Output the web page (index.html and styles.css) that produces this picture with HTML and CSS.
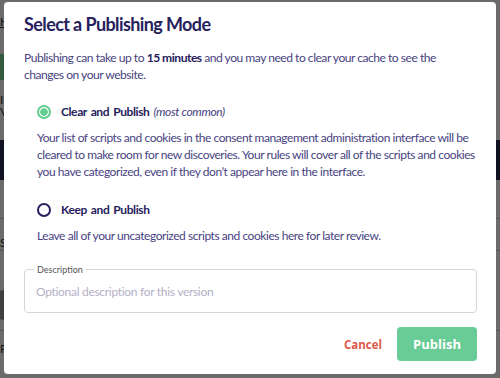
FILE: index.html
```html
<!DOCTYPE html>
<html lang="en">
<head>
    <meta charset="UTF-8">
    <meta name="viewport" content="width=device-width, initial-scale=1.0">
    <title>Select a Publishing Mode</title>
    <link rel="stylesheet" href="styles.css">
</head>
<body>
    <!-- Page behind the dialog -->
    <div class="page">
        <a class="page-link" href="#">Home</a>
        <div class="page-banner"></div>
        <p class="page-note">Info<br>View</p>
        <div class="page-band"></div>
        <div class="page-row page-row-first">Scripts</div>
        <div class="page-row page-row-tall"><span class="page-avatar"></span></div>
        <div class="page-row">Rules</div>
    </div>

    <!-- Dialog -->
    <div class="overlay">
        <div class="modal">
            <h1 class="modal-title">Select a Publishing Mode</h1>
            <p class="modal-intro">Publishing can take up to <strong>15 minutes</strong> and you may need to clear your cache to see the changes on your website.</p>

            <div class="option">
                <label class="option-label">
                    <span class="radio radio-checked"></span>
                    <span>Clear and Publish <em>(most common)</em></span>
                </label>
                <p class="option-text">Your list of scripts and cookies in the consent management administration interface will be cleared to make room for new discoveries. Your rules will cover all of the scripts and cookies you have categorized, even if they don’t appear here in the interface.</p>
            </div>

            <div class="option">
                <label class="option-label">
                    <span class="radio"></span>
                    <span>Keep and Publish</span>
                </label>
                <p class="option-text">Leave all of your uncategorized scripts and cookies here for later review.</p>
            </div>

            <fieldset class="field">
                <legend>Description</legend>
                <input type="text" placeholder="Optional description for this version">
            </fieldset>

            <div class="actions">
                <button class="btn-cancel">Cancel</button>
                <button class="btn-publish">Publish</button>
            </div>
        </div>
    </div>
</body>
</html>
```

FILE: styles.css
```css
* {
    margin: 0;
    padding: 0;
    box-sizing: border-box;
}

body {
    font-family: 'Lato', sans-serif;
    background-color: #fff;
    color: #333;
    width: 500px;
    height: 378px;
    overflow: hidden;
}

/* Background page */
.page {
    padding-top: 14px;
}

.page-link {
    display: block;
    font-size: 12px;
    color: #333;
    height: 28px;
}

.page-banner {
    height: 26px;
    width: 60px;
    background-color: #7bd99a;
    margin-top: 12px;
}

.page-note {
    font-size: 12px;
    line-height: 12px;
    padding-top: 14px;
    height: 60px;
}

.page-band {
    height: 40px;
    background-color: #262a55;
}

.page-row {
    border-top: 1px solid #ccc;
    padding-top: 10px;
    font-size: 12px;
    height: 40px;
}

.page-row-first {
    margin-top: 38px;
    padding-top: 16px;
    height: 32px;
}

.page-row-tall {
    height: 80px;
    padding-top: 39px;
}

.page-avatar {
    display: block;
    width: 30px;
    height: 30px;
    border-radius: 50%;
    background-color: #999;
    margin-left: -10px;
}

/* Dialog */
.overlay {
    position: fixed;
    inset: 0;
    background-color: rgba(0, 0, 0, 0.58);
    padding: 2px 4px 4px 4px;
}

.modal {
    background-color: #fff;
    border-radius: 4px;
    height: 372px;
    padding: 9px 19px 0 20px;
    color: #48437f;
}

.modal-title {
    font-size: 18px;
    font-weight: 700;
    letter-spacing: -0.6px;
    color: #26215c;
    line-height: 26px;
}

.modal-intro {
    font-size: 12.1px;
    letter-spacing: -0.5px;
    line-height: 17px;
    margin-top: 12px;
    height: 34px;
}

.modal-intro strong {
    font-weight: 700;
    color: #26215c;
}

.option {
    margin-top: 20px;
}

.option + .option {
    margin-top: 21px;
}

.option-label {
    display: flex;
    align-items: center;
    gap: 10px;
    font-size: 12px;
    letter-spacing: -0.4px;
    word-spacing: 1.5px;
    color: #26215c;
    font-weight: 700;
    padding-left: 13px;
    line-height: 18px;
}

.option-label em {
    font-weight: 400;
    color: #48437f;
    word-spacing: 0;
}

.radio {
    flex: none;
    width: 14px;
    height: 14px;
    border-radius: 50%;
    border: 2px solid #26215c;
}

.radio-checked {
    border-color: #62cd8f;
    background: radial-gradient(circle, #62cd8f 0 3.5px, #fff 4px);
}

.option-text {
    font-size: 12px;
    letter-spacing: -0.45px;
    line-height: 17px;
    margin-top: 8px;
    padding-left: 13px;
}

.field {
    margin-top: 20px;
    border: 1px solid #d6d6d6;
    border-radius: 4px;
    padding: 0 11px 0 11px;
    height: 49px;
}

.field legend {
    font-size: 9px;
    line-height: 11px;
    color: #555;
    padding: 0 3px;
    margin-left: -2px;
}

.field input {
    display: block;
    border: none;
    outline: none;
    width: 100%;
    font-family: 'Lato', sans-serif;
    font-size: 12px;
    letter-spacing: -0.3px;
    height: 16px;
    line-height: 16px;
    margin-top: 9px;
    color: #333;
}

.field input::placeholder {
    color: #b4b1c8;
}

.actions {
    display: flex;
    justify-content: flex-end;
    align-items: center;
    gap: 15px;
    margin-top: 14px;
}

.actions button {
    font-family: 'Open Sans', sans-serif;
    font-weight: 700;
    border: none;
    cursor: pointer;
}

.btn-cancel {
    background: none;
    color: #e0584a;
    font-size: 11.5px;
}

.btn-publish {
    background-color: #69cb95;
    color: #fff;
    width: 80px;
    height: 34px;
    border-radius: 4px;
    font-size: 13px;
}
```
